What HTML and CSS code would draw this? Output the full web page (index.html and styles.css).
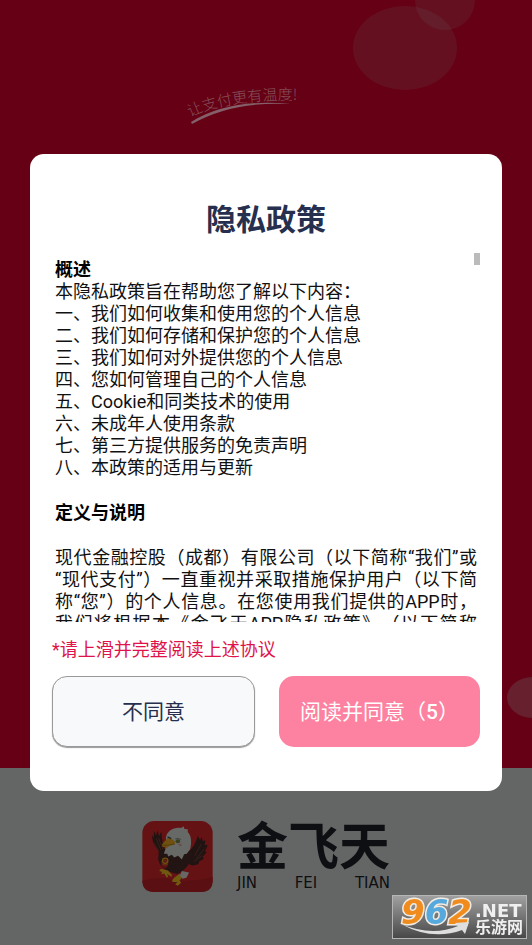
FILE: index.html
```html
<!DOCTYPE html>
<html lang="zh-CN">
<head>
    <meta charset="utf-8">
    <meta name="viewport" content="width=device-width, initial-scale=1">
    <title>隐私政策</title>
    <link rel="stylesheet" href="styles.css">
</head>
<body>
    <div class="splash">
        <div class="hero">
            <div class="bubble bubble-big"></div>
            <div class="bubble bubble-top"></div>
            <div class="bubble bubble-side"></div>
            <svg class="slogan" width="168" height="50" viewBox="0 0 168 50">
                <path id="slogan-line" d="M8 37 Q48 18 124 20" fill="none"/>
                <text><textPath href="#slogan-line">让支付更有温度!</textPath></text>
                <path class="swoosh" d="M9 42 Q48 18 109 24 Q50 21 10 44 Z"/>
            </svg>
        </div>
        <div class="brand">
            <svg class="brand-icon" width="71" height="71" viewBox="0 0 212 214">
                <rect width="212" height="214" rx="36" fill="#651214"/>
                <path d="M0 180 Q40 166 90 176 Q150 186 212 168 V180 Q212 214 176 214 H36 Q0 214 0 180Z" fill="#5a1012"/>
                <path d="M50 90 C36 76 29 60 30 42 L35 50 L35 31 L42 44 L45 29 L51 46 L57 32 C58 54 62 74 71 92 L66 112 C54 109 48 101 50 90Z" fill="#201311"/>
                <path d="M130 96 C150 88 160 70 167 45 L174 57 L179 48 L182 61 L190 57 L188 72 L197 72 L189 91 L194 94 L182 108 L185 114 L171 122 L169 130 L150 134 L130 124Z" fill="#201311"/>
                <path d="M50 87 C72 98 118 90 151 94 C150 126 132 145 106 160 C82 154 52 143 48 116Z" fill="#211412"/>
                <path d="M35 66 L49 89 M42 53 L56 88 M49 51 L62 86 M177 70 L158 105 M187 84 L163 113 M181 104 L155 123" stroke="#34211a" stroke-width="3" fill="none"/>
                <path d="M71 50 C75 27 97 17 117 21 L124 16 L127 24 L137 25 L137 33 C149 45 149 67 144 85 L134 99 L126 100 L119 116 L108 105 L96 110 L89 102 L78 107 L75 99 L65 99 L72 77Z" fill="#676967"/>
                <path d="M76 51 C87 53 101 57 98 70 C90 74 82 72 77 79 L67 84 L70 77 C63 82 57 76 60 69 C64 63 71 59 76 51Z" fill="#70500e"/>
                <path d="M61 73 Q78 75 97 69" stroke="#513d10" stroke-width="3" fill="none"/>
                <path d="M76 48 L87 53" stroke="#242522" stroke-width="4"/>
                <ellipse cx="107" cy="61" rx="7" ry="6" fill="#38401f"/>
                <path d="M99 54 Q108 50 117 56" stroke="#303332" stroke-width="2" fill="none"/>
                <path d="M108 71 L117 69 M111 75 L119 73" stroke="#6c3636" stroke-width="2"/>
                <path d="M57 119 Q52 138 68 143 Q84 137 76 114Z" fill="#5d1116"/>
                <circle cx="69" cy="120" r="8" fill="none" stroke="#69500e" stroke-width="4"/>
                <path d="M61 132 H76 M65 115 L74 124" stroke="#69500e" stroke-width="2"/>
                <path d="M56 144 L51 151 L59 153 L58 161 L66 158 L73 170 L78 169 L75 160 L88 169 L89 162 L77 149Z" fill="#705a10"/>
                <path d="M97 170 L112 159 L119 172 L112 179 L117 186 L107 195 L99 191 L106 184 L91 184 L90 178Z" fill="#705a10"/>
                <path d="M119 151 L141 155 L133 171 L121 174 L113 164Z" fill="#686866"/>
            </svg>
            <div class="brand-text">
                <div class="brand-name">金飞天</div>
                <div class="brand-latin"><span>JIN</span><span>FEI</span><span>TIAN</span></div>
            </div>
        </div>
    </div>

    <div class="overlay">
        <div class="dialog" role="dialog" aria-labelledby="dialog-title">
            <h1 id="dialog-title">隐私政策</h1>
            <div class="policy-box">
                <div class="policy">
                    <h2>概述</h2>
                    <p>
                        本隐私政策旨在帮助您了解以下内容：<br>
                        一、我们如何收集和使用您的个人信息<br>
                        二、我们如何存储和保护您的个人信息<br>
                        三、我们如何对外提供您的个人信息<br>
                        四、您如何管理自己的个人信息<br>
                        五、Cookie和同类技术的使用<br>
                        六、未成年人使用条款<br>
                        七、第三方提供服务的免责声明<br>
                        八、本政策的适用与更新
                    </p>
                    <h2 class="section">定义与说明</h2>
                    <p class="full">现代金融控股（成都）有限公司（以下简称“我们”或“现代支付”）一直重视并采取措施保护用户（以下简称“您”）的个人信息。在您使用我们提供的APP时，我们将根据本《金飞天APP隐私政策》（以下简称</p>
                </div>
                <div class="thumb"></div>
            </div>
            <p class="hint">*请上滑并完整阅读上述协议</p>
            <div class="actions">
                <button type="button" class="btn btn-refuse">不同意</button>
                <button type="button" class="btn btn-agree">阅读并同意（<b>5</b>）</button>
            </div>
        </div>
    </div>

    <div class="watermark">
        <div class="mark-digits">9<span class="blue">6</span>2</div>
        <div class="mark-side">
            <div class="mark-net">.NET</div>
            <div class="mark-name">乐游网</div>
        </div>
        <svg class="mark-smile" width="70" height="16" viewBox="0 0 70 16">
            <path d="M1 2 Q32 15 58 4 L55 1 L69 0 L65 12 L62 8 Q32 19 1 2Z" fill="#dedede"/>
        </svg>
    </div>
</body>
</html>
```

FILE: styles.css
```css
* {
    box-sizing: border-box;
}

body {
    margin: 0;
    font-family: Roboto, "Noto Sans CJK SC", sans-serif;
    font-size: 18px;
    line-height: 22px;
    color: #111;
    text-spacing-trim: space-all;
}

h1, h2, p {
    margin: 0;
}

/* splash screen behind the dialog */
.splash {
    display: flex;
    flex-direction: column;
    min-height: 100vh;
    background: #646665;
}

.hero {
    position: relative;
    flex: 1;
    overflow: hidden;
    background: #660015;
}

.bubble {
    position: absolute;
    border-radius: 50%;
    background: rgba(102, 102, 102, 0.16);
}

.bubble-big {
    top: 6px;
    right: 75px;
    width: 104px;
    height: 84px;
}

.bubble-top {
    top: -30px;
    right: 57px;
    width: 60px;
    height: 60px;
}

.bubble-side {
    right: -27px;
    bottom: 50px;
    width: 52px;
    height: 41px;
    background: #66202e;
}

.slogan {
    display: block;
    margin: 80px auto 0;
    overflow: visible;
    font-family: "Noto Sans CJK SC", sans-serif;
    font-size: 15px;
    font-weight: 300;
    fill: #85505a;
}

.swoosh {
    fill: #85606a;
}

.brand {
    display: flex;
    justify-content: center;
    gap: 24px;
    height: 177px;
    padding-top: 53px;
}

.brand-icon {
    flex: none;
}

.brand-text {
    width: 153px;
    color: #0e0f13;
}

.brand-name {
    font-size: 51px;
    line-height: 54px;
    font-weight: bold;
}

.brand-latin {
    display: flex;
    justify-content: space-between;
    font-family: "DejaVu Sans", sans-serif;
    font-size: 15px;
    line-height: 16px;
}

/* privacy dialog */
.overlay {
    position: fixed;
    inset: 0;
    display: flex;
    align-items: center;
    justify-content: center;
}

.dialog {
    width: calc(100% - 60px);
    padding: 44px 22px;
    border-radius: 14px;
    background: #fff;
}

.dialog h1 {
    margin-bottom: 11px;
    font-size: 30px;
    line-height: 44px;
    text-align: center;
    color: #262f4d;
}

.policy-box {
    position: relative;
}

.policy {
    max-height: 369px;
    padding: 6px 3px 0;
    overflow-y: auto;
    scrollbar-width: none;
}

.policy h2 {
    font-size: 18px;
    line-height: 22px;
    color: #000;
}

.policy .section {
    margin: 23px 0;
}

.policy .full {
    text-align: justify;
    text-align-last: justify;
}

.thumb {
    position: absolute;
    top: 0;
    right: 0;
    width: 6px;
    height: 12px;
    background: #bbb;
}

.hint {
    margin: 16px 0 14px;
    line-height: 24px;
    color: #e0124a;
}

.actions {
    display: flex;
    gap: 24px;
}

.btn {
    flex: 1;
    height: 71px;
    padding: 0 0 4px;
    border: 0;
    border-radius: 15px;
    font-family: inherit;
    font-size: 21px;
    white-space: nowrap;
}

.btn b {
    font-weight: 500;
}

.btn-refuse {
    border: 1px solid #999;
    background: #f8f9fb;
    color: #262f4d;
    box-shadow: 0 1px 1px #999;
}

.btn-agree {
    background: #fd81a0;
    color: #fff;
}

/* site badge in the corner */
.watermark {
    position: fixed;
    right: 5px;
    bottom: 6px;
    display: flex;
    justify-content: space-between;
    width: 135px;
    height: 44px;
    padding: 0 3px 0 8px;
    border: 1px solid #b5b5b5;
    background: linear-gradient(#a0a0a0, #484848);
}

.mark-digits {
    font-family: "DejaVu Sans", sans-serif;
    font-size: 34px;
    line-height: 32px;
    font-weight: bold;
    font-style: italic;
    color: #f08c1e;
    -webkit-text-stroke: 3px #f2ece4;
    paint-order: stroke fill;
}

.mark-digits .blue {
    color: #55a9dc;
}

.mark-side {
    color: #f0f0f0;
}

.mark-net {
    font-family: "DejaVu Sans", sans-serif;
    font-size: 18px;
    line-height: 18px;
    padding-top: 6px;
    font-weight: bold;
}

.mark-name {
    font-size: 16px;
    line-height: 16px;
    font-weight: bold;
}

.mark-smile {
    position: absolute;
    left: 7px;
    bottom: 0;
}
```
